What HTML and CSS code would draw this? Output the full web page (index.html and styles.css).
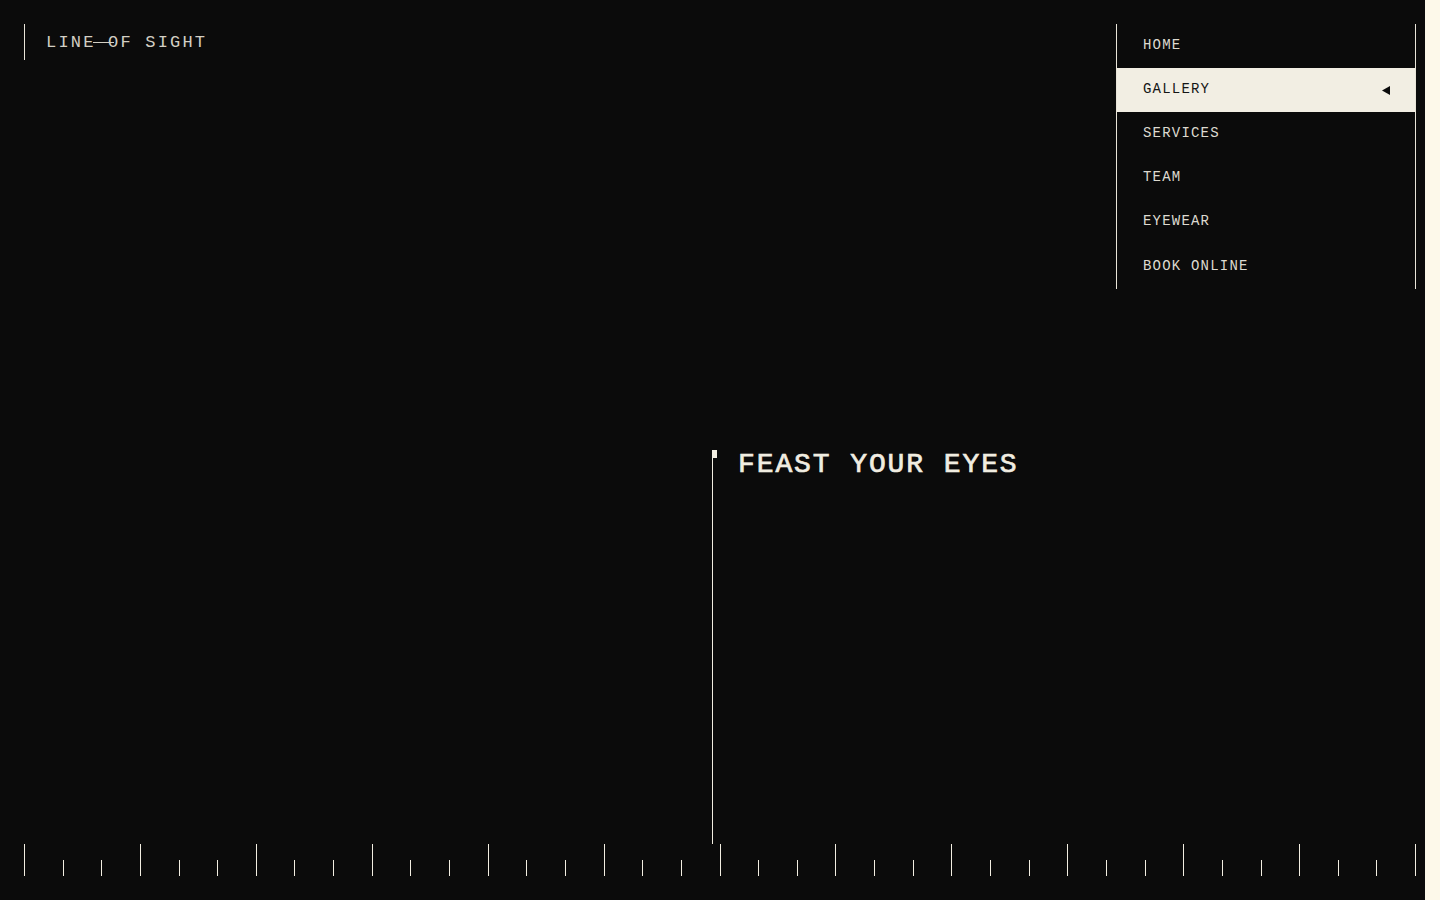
FILE: index.html
```html
<!DOCTYPE html>
<html lang="en">
<head>
<meta charset="utf-8">
<title>Line of Sight</title>
<link rel="stylesheet" href="styles.css">
</head>
<body>
<div class="page">
  <header class="header">
    <div class="logo">LINE<span class="strike"> O</span>F SIGHT</div>
    <nav class="nav">
      <a class="nav-item" href="#">HOME</a>
      <a class="nav-item active" href="#">GALLERY<svg class="caret" width="8" height="9" viewBox="0 0 8 9"><polygon points="8,0 8,9 0,4.5" fill="#0b0b0b"/></svg></a>
      <a class="nav-item" href="#">SERVICES</a>
      <a class="nav-item" href="#">TEAM</a>
      <a class="nav-item" href="#">EYEWEAR</a>
      <a class="nav-item" href="#">BOOK ONLINE</a>
    </nav>
  </header>
  <main class="main">
    <section class="hero">
      <h1 class="title">FEAST YOUR EYES</h1>
    </section>
  </main>
  <div class="ruler">
    <i class="t big"></i><i class="t"></i><i class="t"></i>
    <i class="t big"></i><i class="t"></i><i class="t"></i>
    <i class="t big"></i><i class="t"></i><i class="t"></i>
    <i class="t big"></i><i class="t"></i><i class="t"></i>
    <i class="t big"></i><i class="t"></i><i class="t"></i>
    <i class="t big"></i><i class="t"></i><i class="t"></i>
    <i class="t big"></i><i class="t"></i><i class="t"></i>
    <i class="t big"></i><i class="t"></i><i class="t"></i>
    <i class="t big"></i><i class="t"></i><i class="t"></i>
    <i class="t big"></i><i class="t"></i><i class="t"></i>
    <i class="t big"></i><i class="t"></i><i class="t"></i>
    <i class="t big"></i><i class="t"></i><i class="t last"></i>
  </div>
</div>
<div class="edge"></div>
</body>
</html>
```

FILE: styles.css
```css
* { box-sizing: border-box; }
html, body { margin: 0; padding: 0; }
body {
  display: flex;
  width: 1440px;
  height: 900px;
  overflow: hidden;
  background: #0b0b0b;
  font-family: "Liberation Mono", "DejaVu Sans Mono", monospace;
}
.page {
  width: 1425px;
  height: 900px;
  padding: 24px 9px 24px 24px;
  display: flex;
  flex-direction: column;
  background: #0b0b0b;
}
.edge {
  width: 15px;
  height: 900px;
  background: #fdf9ea;
}
.header {
  display: flex;
  justify-content: space-between;
  align-items: flex-start;
}
.logo {
  height: 36px;
  border-left: 1px solid #e9e5d9;
  padding-left: 21px;
  display: flex;
  align-items: center;
  font-size: 17px;
  letter-spacing: 2.2px;
  color: #d3cfc4;
  white-space: pre;
}
.strike {
  position: relative;
}
.strike::after {
  content: "";
  position: absolute;
  left: -3px;
  top: 50%;
  width: 21px;
  height: 1px;
  background: #d3cfc4;
}
.nav {
  width: 300px;
  border-left: 1px solid #e9e5d9;
  border-right: 1px solid #e9e5d9;
  display: flex;
  flex-direction: column;
}
.nav-item {
  height: 44.2px;
  padding: 0 25px 3px 26px;
  display: flex;
  align-items: center;
  justify-content: space-between;
  font-size: 14px;
  letter-spacing: 1.2px;
  color: #dedad0;
  text-decoration: none;
}
.nav-item.active {
  background: #f2eee3;
  color: #151515;
}
.caret { display: block; margin-top: 3px; }
.main {
  flex: 1;
  display: flex;
  align-items: flex-end;
}
.hero {
  margin-left: 688px;
  height: 394px;
  border-left: 1px solid #f2eee2;
  padding-left: 25px;
  position: relative;
}
.hero::before {
  content: "";
  position: absolute;
  left: -1px;
  top: 0;
  width: 5px;
  height: 8px;
  background: #f2eee2;
}
.title {
  margin: 1px 0 0;
  font-size: 28px;
  line-height: 28px;
  font-weight: 400;
  -webkit-text-stroke: 0.7px #f1ede1;
  letter-spacing: 1.9px;
  color: #f1ede1;
}
.ruler {
  height: 32px;
  margin-right: 1px;
  display: flex;
  align-items: flex-end;
}
.t {
  flex: 1;
  height: 16px;
  border-left: 1px solid #f2eee2;
}
.t.big { height: 32px; }
.t.last { position: relative; }
.t.last::after {
  content: "";
  position: absolute;
  right: -1px;
  bottom: 0;
  width: 1px;
  height: 32px;
  background: #f2eee2;
}
```
